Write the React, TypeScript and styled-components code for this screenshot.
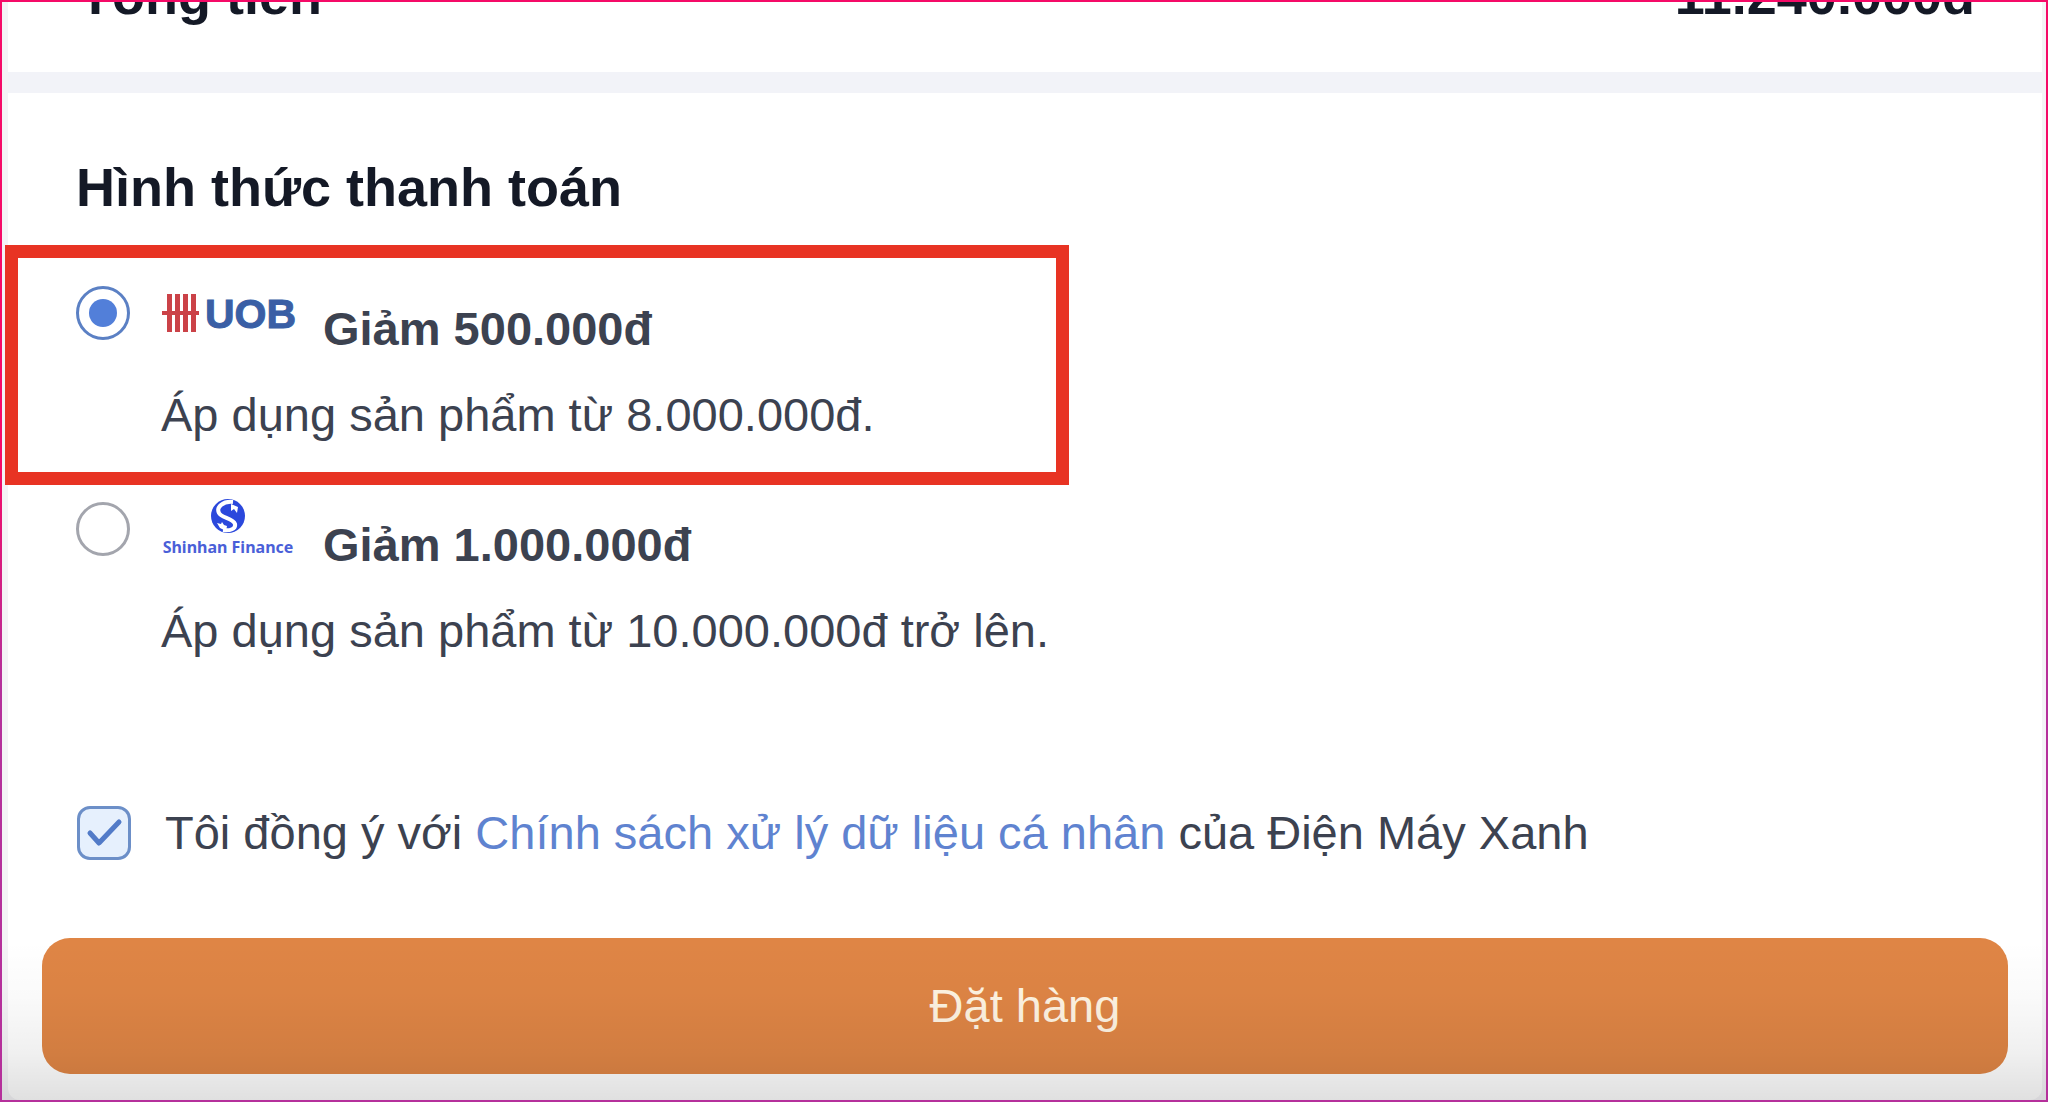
import React, { useState } from "react";
import styled, { createGlobalStyle } from "styled-components";

const GlobalStyle = createGlobalStyle`
  *, *::before, *::after { box-sizing: border-box; }
  body {
    margin: 0;
    background: #ffffff;
    color: #3c4250;
    font-family: "Liberation Sans", Arial, Helvetica, sans-serif;
  }
`;

const Frame = styled.div`
  position: relative;
  display: flex;
  flex-direction: column;
  min-height: 100vh;
  padding: 2px;
  overflow: hidden;
  background: linear-gradient(#f50a67 0%, #f50a67 42%, #b5309b 62%, #b5309b 100%);
`;

const Sheet = styled.main`
  flex: 1;
  display: flex;
  flex-direction: column;
  overflow-x: visible;
  overflow-y: clip;
  padding: 0 4px 0 6px;
  background: #f4f3f6;
`;

const TotalRow = styled.div`
  display: flex;
  justify-content: space-between;
  margin-top: -39px;
  padding: 0 67px 45px 71px;
  background: #ffffff;
  color: #141926;
  font-size: 54px;
  font-weight: 700;
  line-height: 64px;
`;

const Divider = styled.hr`
  width: 100%;
  height: 21px;
  margin: 0;
  border: 0;
  background: #f2f3f8;
`;

const Payment = styled.form`
  flex: 1;
  display: flex;
  flex-direction: column;
  padding: 62px 34px 26px;
  background: #ffffff;
  border-radius: 0 0 12px 12px;
`;

const Group = styled.fieldset`
  min-width: 0;
  margin: 0;
  padding: 0 34px;
  border: 0;
`;

const Heading = styled.h2`
  margin: 0 0 26px;
  color: #141926;
  font-size: 54px;
  font-weight: 700;
  line-height: 64px;
`;

const Option = styled.label`
  position: relative;
  display: flex;
  align-items: flex-start;
  gap: 31px;
  padding-bottom: 14px;
  cursor: pointer;
`;

const Radio = styled.input`
  appearance: none;
  flex: none;
  display: grid;
  place-items: center;
  width: 54px;
  height: 54px;
  margin: 41px 0 0;
  border: 3px solid #a3a5ad;
  border-radius: 50%;
  background: #ffffff;

  &:checked {
    border-color: #5b80c4;
  }
  &:checked::before {
    content: "";
    width: 28px;
    height: 28px;
    border-radius: 50%;
    background: #527fd9;
  }
`;

const OptionBody = styled.span`
  display: flex;
  flex-direction: column;
  gap: 22px;
  padding-top: 32px;
`;

const OptionHead = styled.span`
  display: flex;
  align-items: flex-start;
  gap: 28px;
`;

const Logo = styled.svg`
  flex: none;
  width: 134px;
  height: 64px;
  overflow: visible;
`;

const Discount = styled.strong`
  padding-top: 20px;
  font-size: 47px;
  font-weight: 700;
  line-height: 64px;
`;

const Condition = styled.span`
  font-size: 47px;
  line-height: 64px;
`;

const Highlight = styled.span`
  position: absolute;
  top: 0;
  left: -71px;
  width: 1064px;
  height: 240px;
  border: 13px solid #e83323;
  pointer-events: none;
`;

const Consent = styled.div`
  display: flex;
  align-items: center;
  gap: 34px;
  margin: 124px 35px 73px;
`;

const Tick = styled.input`
  appearance: none;
  flex: none;
  width: 54px;
  height: 54px;
  margin: 0;
  border: 3px solid #6c8fc8;
  border-radius: 13px;
  background: #ffffff;

  &:checked {
    background: #e6f0fd;
  }
`;

const TickBox = styled.span`
  position: relative;
  display: flex;

  svg {
    position: absolute;
    inset: 0;
    pointer-events: none;
  }
`;

const ConsentText = styled.label`
  font-size: 47px;
  line-height: 64px;
`;

const PolicyLink = styled.a`
  color: #5f83d0;
  text-decoration: none;
`;

const OrderButton = styled.button`
  height: 136px;
  border: 0;
  border-radius: 28px;
  background: #df8545;
  color: #fff4e2;
  font-family: inherit;
  font-size: 47px;
  line-height: 64px;
  cursor: pointer;
`;

const BottomShade = styled.div`
  position: absolute;
  inset: auto 2px 2px;
  height: 160px;
  background: linear-gradient(
    rgba(0, 0, 0, 0) 0%,
    rgba(0, 0, 0, 0.02) 35%,
    rgba(0, 0, 0, 0.06) 70%,
    rgba(0, 0, 0, 0.12) 100%
  );
  pointer-events: none;
`;

const UobLogo = () => (
  <Logo viewBox="0 0 134 64" role="img" aria-label="UOB">
    <g stroke="#cb4248" fill="none">
      <path d="M8.5 17v38M16.5 17v38M24.5 17v38M32.5 17v38" strokeWidth="5" />
      <path d="M1 36h37" strokeWidth="4" />
    </g>
    <text
      x="44"
      y="51"
      fill="#3a5fa5"
      stroke="#3a5fa5"
      strokeWidth="1"
      fontSize="41"
      fontWeight="700"
    >
      UOB
    </text>
  </Logo>
);

const ShinhanLogo = () => (
  <Logo viewBox="0 0 134 64" role="img" aria-label="Shinhan Finance">
    <circle cx="67" cy="23" r="17" fill="#2b48dc" />
    <path
      d="M72 9C62 8 55 14 58 20C60 25 72 25 74 31C75 36 69 38 62 37"
      fill="none"
      stroke="#ffffff"
      strokeWidth="4"
    />
    <path d="M70 11l7 3-1 6-3-4-3 2z" fill="#ffffff" />
    <path d="M56 30l4 1 1-2 2 3 3 1-1 5-6-3z" fill="#ffffff" />
    <text
      x="67"
      y="60"
      textAnchor="middle"
      fill="#4a5fd8"
      fontFamily="'Noto Sans', sans-serif"
      fontSize="16"
      fontWeight="700"
    >
      Shinhan Finance
    </text>
  </Logo>
);

const options = [
  {
    id: "uob",
    logo: <UobLogo />,
    discount: "Giảm 500.000đ",
    condition: "Áp dụng sản phẩm từ 8.000.000đ.",
    highlighted: true,
  },
  {
    id: "shinhan",
    logo: <ShinhanLogo />,
    discount: "Giảm 1.000.000đ",
    condition: "Áp dụng sản phẩm từ 10.000.000đ trở lên.",
    highlighted: false,
  },
];

export default function App() {
  const [method, setMethod] = useState("uob");
  const [agreed, setAgreed] = useState(true);

  return (
    <>
      <GlobalStyle />
      <Frame>
        <Sheet>
          <TotalRow>
            <span>Tổng tiền</span>
            <span>11.240.000đ</span>
          </TotalRow>
          <Divider />
          <Payment onSubmit={(e) => e.preventDefault()}>
            <Group aria-labelledby="payment-heading">
              <Heading id="payment-heading">Hình thức thanh toán</Heading>
              {options.map((o) => (
                <Option key={o.id} htmlFor={o.id}>
                  <Radio
                    type="radio"
                    id={o.id}
                    name="payment"
                    checked={method === o.id}
                    onChange={() => setMethod(o.id)}
                  />
                  <OptionBody>
                    <OptionHead>
                      {o.logo}
                      <Discount>{o.discount}</Discount>
                    </OptionHead>
                    <Condition>{o.condition}</Condition>
                  </OptionBody>
                  {o.highlighted && <Highlight />}
                </Option>
              ))}
            </Group>
            <Consent>
              <TickBox>
                <Tick
                  type="checkbox"
                  id="consent"
                  checked={agreed}
                  onChange={(e) => setAgreed(e.target.checked)}
                />
                {agreed && (
                  <svg width="54" height="54" viewBox="0 0 54 54" aria-hidden="true">
                    <path
                      d="M13 27l9 10 20-21"
                      fill="none"
                      stroke="#527bc8"
                      strokeWidth="5"
                      strokeLinecap="round"
                      strokeLinejoin="round"
                    />
                  </svg>
                )}
              </TickBox>
              <ConsentText htmlFor="consent">
                Tôi đồng ý với{" "}
                <PolicyLink href="#policy">Chính sách xử lý dữ liệu cá nhân</PolicyLink> của
                Điện Máy Xanh
              </ConsentText>
            </Consent>
            <OrderButton type="submit">Đặt hàng</OrderButton>
          </Payment>
        </Sheet>
        <BottomShade />
      </Frame>
    </>
  );
}
